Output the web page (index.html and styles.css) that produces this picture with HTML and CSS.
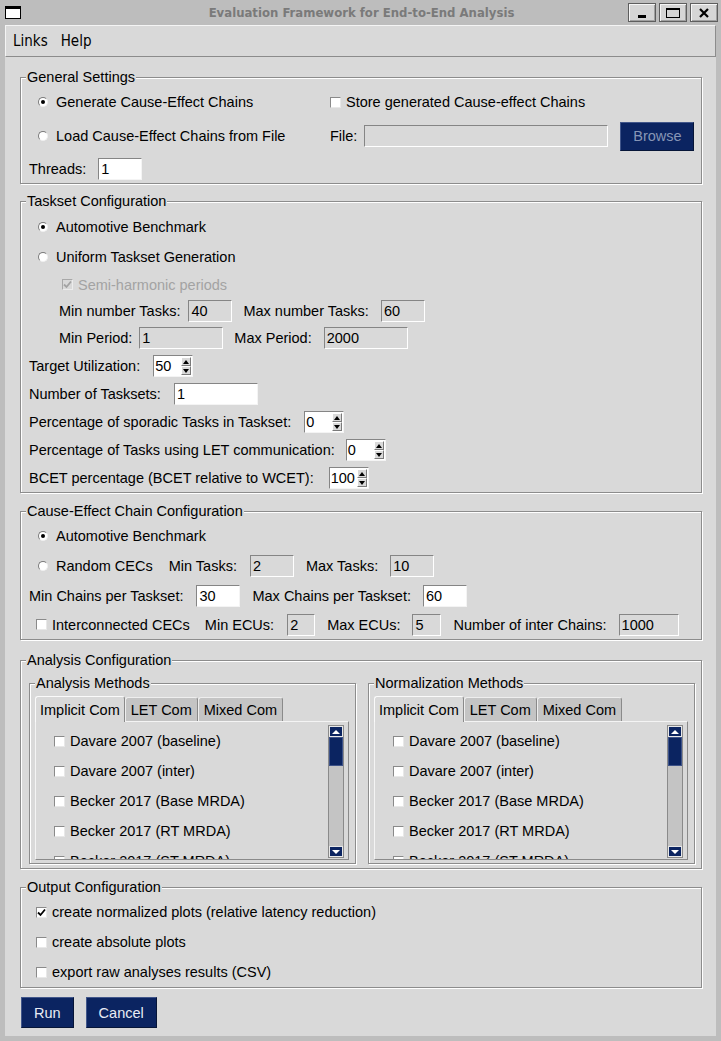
FILE: index.html
```html
<!DOCTYPE html>
<html lang="en">
<head>
<meta charset="utf-8">
<title>Evaluation Framework for End-to-End Analysis</title>
<link rel="stylesheet" href="styles.css">
</head>
<body>
<div class="titlebar">
  <div class="tb-left">
    <svg class="app-icon" width="16" height="13" viewBox="0 0 16 13"><rect x="0.5" y="0.5" width="15" height="12" fill="#fff" stroke="#000"/><rect x="0" y="0" width="16" height="3" fill="#000"/></svg>
  </div>
  <div class="title">Evaluation Framework for End-to-End Analysis</div>
  <div class="wm-buttons">
    <div class="wm-btn"><svg width="10" height="12" viewBox="0 0 10 12"><rect x="1" y="8" width="8" height="3" fill="#000"/></svg></div>
    <div class="wm-btn"><svg width="14" height="10" viewBox="0 0 14 10"><rect x="0.5" y="0.5" width="13" height="9" fill="none" stroke="#000"/><rect x="0" y="0" width="14" height="2" fill="#000"/></svg></div>
    <div class="wm-btn"><svg width="10" height="10" viewBox="0 0 10 10"><path d="M1 1L9 9M9 1L1 9" stroke="#000" stroke-width="2.2"/></svg></div>
  </div>
</div>

<div class="window-body">
  <div class="menubar"><span>Links</span><span>Help</span></div>

  <div class="content">
    <!-- General Settings -->
    <section class="group general">
      <div class="group-title">General Settings</div>
      <div class="gs-grid">
        <div class="opt"><span class="radio on"></span>Generate Cause-Effect Chains</div>
        <div class="opt"><span class="check"></span>Store generated Cause-effect Chains</div>
        <div class="opt"><span class="radio"></span>Load Cause-Effect Chains from File</div>
        <div class="opt"><span>File:</span><div class="entry dis w244 ml7"></div><div class="btn dis ml12 browse">Browse</div></div>
      </div>
      <div class="row r28 pl8"><span>Threads:</span><div class="entry w44 ml12">1</div></div>
    </section>

    <!-- Taskset Configuration -->
    <section class="group taskset">
      <div class="group-title">Taskset Configuration</div>
      <div class="row r30 pl17"><span class="radio on"></span>Automotive Benchmark</div>
      <div class="row r30 pl17"><span class="radio"></span>Uniform Taskset Generation</div>
      <div class="row r25 pl41 disabled"><span class="check dis on"><svg width="9" height="9" viewBox="0 0 9 9"><path d="M1 4.5L3.5 7L8 1.5" fill="none" stroke="#a3a3a3" stroke-width="1.8"/></svg></span>Semi-harmonic periods</div>
      <div class="row r27 pl38"><span>Min number Tasks:</span><div class="entry dis w44 ml8">40</div><span class="ml11">Max number Tasks:</span><div class="entry dis w44 ml12">60</div></div>
      <div class="row r28 pl38"><span>Min Period:</span><div class="entry dis w84 ml7">1</div><span class="ml11">Max Period:</span><div class="entry dis w84 ml12">2000</div></div>
      <div class="row r28 pl8"><span>Target Utilization:</span><div class="spin ml13"><span class="val">50</span><span class="arrows"><span class="arr"><i class="up"></i></span><span class="arr"><i class="down"></i></span></span></div></div>
      <div class="row r28 pl8"><span>Number of Tasksets:</span><div class="entry w84 ml13">1</div></div>
      <div class="row r28 pl8"><span>Percentage of sporadic Tasks in Taskset:</span><div class="spin ml13"><span class="val">0</span><span class="arrows"><span class="arr"><i class="up"></i></span><span class="arr"><i class="down"></i></span></span></div></div>
      <div class="row r28 pl8"><span>Percentage of Tasks using LET communication:</span><div class="spin ml11"><span class="val">0</span><span class="arrows"><span class="arr"><i class="up"></i></span><span class="arr"><i class="down"></i></span></span></div></div>
      <div class="row r28 pl8"><span>BCET percentage (BCET relative to WCET):</span><div class="spin ml15"><span class="val">100</span><span class="arrows"><span class="arr"><i class="up"></i></span><span class="arr"><i class="down"></i></span></span></div></div>
    </section>

    <!-- Cause-Effect Chain Configuration -->
    <section class="group cec">
      <div class="group-title">Cause-Effect Chain Configuration</div>
      <div class="row r30 pl17"><span class="radio on"></span>Automotive Benchmark</div>
      <div class="row r30 pl17"><span class="radio"></span>Random CECs<span class="ml16">Min Tasks:</span><div class="entry dis w44 ml13">2</div><span class="ml12">Max Tasks:</span><div class="entry dis w44 ml12">10</div></div>
      <div class="row r29 pl8"><span>Min Chains per Taskset:</span><div class="entry w44 ml13">30</div><span class="ml12">Max Chains per Taskset:</span><div class="entry w44 ml12">60</div></div>
      <div class="row r29 pl15"><span class="check"></span>Interconnected CECs<span class="ml15">Min ECUs:</span><div class="entry dis w28 ml13">2</div><span class="ml12">Max ECUs:</span><div class="entry dis w29 ml12">5</div><span class="ml12">Number of inter Chains:</span><div class="entry dis w60 ml12">1000</div></div>
    </section>

    <!-- Analysis Configuration -->
    <section class="group analysis">
      <div class="group-title">Analysis Configuration</div>
      <div class="subgroups">
        <section class="group sub">
          <div class="group-title">Analysis Methods</div>
          <div class="tabs">
            <div class="tab sel">Implicit Com</div>
            <div class="tab">LET Com</div>
            <div class="tab">Mixed Com</div>
          </div>
          <div class="panel">
            <div class="list">
              <div class="list-item"><span class="check"></span>Davare 2007 (baseline)</div>
              <div class="list-item"><span class="check"></span>Davare 2007 (inter)</div>
              <div class="list-item"><span class="check"></span>Becker 2017 (Base MRDA)</div>
              <div class="list-item"><span class="check"></span>Becker 2017 (RT MRDA)</div>
              <div class="list-item"><span class="check"></span>Becker 2017 (ST MRDA)</div>
              <div class="list-item"><span class="check"></span>Kloda 2018</div>
            </div>
            <div class="scrollbar">
              <div class="sb-arrow"><i class="tri-up"></i></div>
              <div class="sb-thumb"></div>
              <div class="sb-space"></div>
              <div class="sb-arrow"><i class="tri-down"></i></div>
            </div>
          </div>
        </section>
        <section class="group sub">
          <div class="group-title">Normalization Methods</div>
          <div class="tabs">
            <div class="tab sel">Implicit Com</div>
            <div class="tab">LET Com</div>
            <div class="tab">Mixed Com</div>
          </div>
          <div class="panel">
            <div class="list">
              <div class="list-item"><span class="check"></span>Davare 2007 (baseline)</div>
              <div class="list-item"><span class="check"></span>Davare 2007 (inter)</div>
              <div class="list-item"><span class="check"></span>Becker 2017 (Base MRDA)</div>
              <div class="list-item"><span class="check"></span>Becker 2017 (RT MRDA)</div>
              <div class="list-item"><span class="check"></span>Becker 2017 (ST MRDA)</div>
              <div class="list-item"><span class="check"></span>Kloda 2018</div>
            </div>
            <div class="scrollbar">
              <div class="sb-arrow"><i class="tri-up"></i></div>
              <div class="sb-thumb"></div>
              <div class="sb-space"></div>
              <div class="sb-arrow"><i class="tri-down"></i></div>
            </div>
          </div>
        </section>
      </div>
    </section>

    <!-- Output Configuration -->
    <section class="group output">
      <div class="group-title">Output Configuration</div>
      <div class="row r30 pl15"><span class="check on"><svg width="9" height="9" viewBox="0 0 9 9"><path d="M1 4.5L3.5 7L8 1.5" fill="none" stroke="#000" stroke-width="1.8"/></svg></span>create normalized plots (relative latency reduction)</div>
      <div class="row r30 pl15"><span class="check"></span>create absolute plots</div>
      <div class="row r30 pl15"><span class="check"></span>export raw analyses results (CSV)</div>
    </section>

    <div class="actions">
      <div class="btn">Run</div>
      <div class="btn">Cancel</div>
    </div>
  </div>
</div>
</body>
</html>
```

FILE: styles.css
```css
* { box-sizing: border-box; }
html, body { margin: 0; padding: 0; }
body {
  width: 721px;
  height: 1041px;
  overflow: hidden;
  background: #bdbdbd;
  font-family: "Liberation Sans", Arial, sans-serif;
  font-size: 14.5px;
  color: #000;
}

/* title bar */
.titlebar {
  height: 25px;
  display: grid;
  grid-template-columns: 1fr auto 1fr;
  align-items: center;
  padding: 0 3px 0 5px;
}
.tb-left { display: flex; align-items: center; }
.app-icon { display: block; }
.title {
  font-family: "DejaVu Sans Condensed", "DejaVu Sans", sans-serif;
  font-stretch: condensed;
  font-weight: bold;
  font-size: 13px;
  color: #7a7a7a;
  white-space: nowrap;
}
.wm-buttons { display: flex; justify-content: flex-end; gap: 3px; }
.wm-btn {
  width: 28px;
  height: 19px;
  background: #d6d6d6;
  border: 1px solid #5e5e5e;
  box-shadow: inset 1px 1px 0 #f6f6f6, inset -1px -1px 0 #a0a0a0;
  display: flex;
  align-items: center;
  justify-content: center;
}
.wm-btn svg { display: block; }

/* window body */
.window-body {
  margin-left: 5px;
  width: 711px;
  height: 1011px;
  background: #d9d9d9;
}
.menubar {
  height: 32px;
  display: flex;
  align-items: center;
  gap: 13px;
  padding-left: 7px;
  border: 1px solid;
  border-color: #f4f4f4 #8c8c8c #8c8c8c #f4f4f4;
  font-family: "DejaVu Sans Condensed", "DejaVu Sans", sans-serif;
  font-stretch: condensed;
  font-size: 15px;
}
.content { padding: 0 14px 0 15px; }

/* label frames */
.group {
  position: relative;
  border: 1px solid #8c8c8c;
  box-shadow: 1px 1px 0 #fff, inset 1px 1px 0 #fff;
}
.group-title {
  position: absolute;
  top: -9px;
  left: 5px;
  padding: 0 1px;
  line-height: 17px;
  background: #d9d9d9;
  white-space: nowrap;
}
.general { margin-top: 20px; padding-top: 9px; }
.taskset { margin-top: 17px; padding-top: 10px; }
.cec { margin-top: 18px; padding-top: 9px; }
.analysis { margin-top: 20px; }
.output { margin-top: 18px; padding-top: 9px; }

.gs-grid {
  display: grid;
  grid-template-columns: 292px 1fr;
  grid-template-rows: 30px 38px;
  align-items: center;
  padding-left: 17px;
}
.opt, .row { display: flex; align-items: center; white-space: nowrap; }
.disabled { color: #a3a3a3; }

.r25 { height: 25px; }
.r27 { height: 27px; }
.r28 { height: 28px; }
.r29 { height: 29px; }
.r30 { height: 30px; }
.pl8 { padding-left: 8px; }
.pl15 { padding-left: 15px; }
.pl17 { padding-left: 17px; }
.pl38 { padding-left: 38px; }
.pl41 { padding-left: 41px; }
.ml6 { margin-left: 6px; }
.ml7 { margin-left: 7px; }
.ml8 { margin-left: 8px; }
.ml9 { margin-left: 9px; }
.ml10 { margin-left: 10px; }
.ml11 { margin-left: 11px; }
.ml12 { margin-left: 12px; }
.ml13 { margin-left: 13px; }
.ml14 { margin-left: 14px; }
.ml15 { margin-left: 15px; }
.ml16 { margin-left: 16px; }

/* indicators */
.radio {
  width: 10px;
  height: 10px;
  margin-right: 8px;
  border-radius: 50%;
  background: #fff;
  border: 1px solid;
  border-color: #7a7a7a #f0f0f0 #f0f0f0 #7a7a7a;
  display: flex;
  align-items: center;
  justify-content: center;
  flex: none;
}
.radio.on::after {
  content: "";
  width: 4px;
  height: 4px;
  border-radius: 50%;
  background: #000;
}
.check {
  width: 11px;
  height: 11px;
  margin-right: 5px;
  background: #fff;
  border: 1px solid;
  border-color: #8a8a8a #e8e8e8 #e8e8e8 #8a8a8a;
  display: flex;
  align-items: center;
  justify-content: center;
  flex: none;
}
.check.dis { background: #d9d9d9; border-color: #a8a8a8 #ececec #ececec #a8a8a8; }
.check svg { display: block; }

/* entries */
.entry {
  height: 22px;
  padding: 0 2px;
  background: #fff;
  border: 1px solid;
  border-color: #858585 #f4f4f4 #f4f4f4 #858585;
  display: flex;
  align-items: center;
  flex: none;
}
.entry.dis { background: #d9d9d9; border-color: #858585 #fff #fff #858585; }
.w28 { width: 28px; }
.w29 { width: 29px; }
.w44 { width: 44px; }
.w60 { width: 60px; }
.w84 { width: 84px; }
.w244 { width: 244px; }

.spin {
  width: 40px;
  height: 22px;
  display: flex;
  background: #fff;
  border: 1px solid;
  border-color: #858585 #f4f4f4 #f4f4f4 #858585;
  flex: none;
}
.spin .val { flex: 1; padding-left: 1px; display: flex; align-items: center; }
.spin .arrows { width: 11px; display: flex; flex-direction: column; padding: 1px 1px 1px 0; }
.spin .arr {
  flex: 1;
  background: #d9d9d9;
  border: 1px solid;
  border-color: #fff #7a7a7a #7a7a7a #fff;
  display: flex;
  align-items: center;
  justify-content: center;
}
.spin .up { width: 0; height: 0; border-left: 3.5px solid transparent; border-right: 3.5px solid transparent; border-bottom: 4px solid #000; }
.spin .down { width: 0; height: 0; border-left: 3.5px solid transparent; border-right: 3.5px solid transparent; border-top: 4px solid #000; }

/* buttons */
.btn {
  height: 31px;
  padding: 0 12px;
  background: #0b2461;
  color: #e8ecf4;
  border: 1px solid;
  border-color: #41568a #061537 #061537 #41568a;
  display: flex;
  align-items: center;
  justify-content: center;
  flex: none;
}
.btn.dis { color: #8796b6; }
.browse { width: 74px; height: 29px; padding: 0; }
.actions { display: flex; gap: 12px; margin: 9px 0 0 1px; }

/* analysis */
.subgroups {
  display: grid;
  grid-template-columns: 327px 327px;
  gap: 12px;
  padding: 22px 6px 4px 8px;
}
.sub { padding: 12px 6px 3px 5px; }
.tabs { display: flex; align-items: flex-end; height: 25px; }
.tab {
  height: 24px;
  padding: 0 5px;
  background: #c4c4c4;
  border: 1px solid;
  border-bottom: none;
  border-color: #eeeeee #8a8a8a #8a8a8a #eeeeee;
  border-radius: 3px 3px 0 0;
  display: flex;
  align-items: center;
  white-space: nowrap;
}
.tab.sel {
  padding: 0 4px;
  background: #d9d9d9;
  border-color: #fafafa #8a8a8a #8a8a8a #fafafa;
  position: relative;
  z-index: 1;
  margin-bottom: -1px;
  height: 26px;
}
.panel {
  height: 139px;
  display: flex;
  border: 1px solid;
  border-color: #f4f4f4 #8a8a8a #8a8a8a #f4f4f4;
}
.list {
  flex: 1;
  overflow: hidden;
  padding: 4px 0 0 18px;
}
.list-item { height: 30px; display: flex; align-items: center; white-space: nowrap; }
.scrollbar {
  width: 16px;
  margin: 3px 4px 1px 0;
  background: #c4c4c4;
  border: 1px solid #8a8a8a;
  display: flex;
  flex-direction: column;
}
.sb-arrow {
  height: 11px;
  background: #0b2461;
  border: 1px solid #e8e8e8;
  display: flex;
  align-items: center;
  justify-content: center;
}
.tri-up { width: 0; height: 0; border-left: 4px solid transparent; border-right: 4px solid transparent; border-bottom: 4px solid #fff; }
.tri-down { width: 0; height: 0; border-left: 4px solid transparent; border-right: 4px solid transparent; border-top: 4px solid #fff; }
.sb-thumb { height: 29px; background: #0b2461; border: 1px solid #3d5288; }
.sb-space { flex: 1; }
```
